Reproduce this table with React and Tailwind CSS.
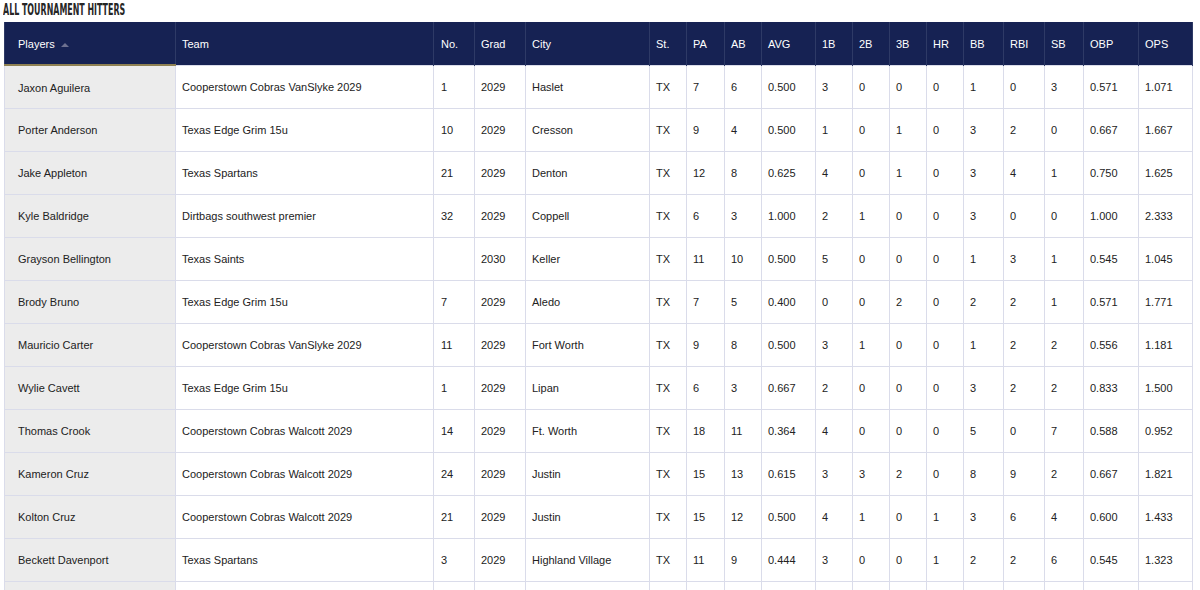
import React from "react";

const cols = [
  { label: "Players", w: "w-[171px]", pad: "pl-[13px]" },
  { label: "Team", w: "w-[258px]", pad: "pl-[6px]" },
  { label: "No.", w: "w-[41px]", pad: "pl-[7px]" },
  { label: "Grad", w: "w-[51px]", pad: "pl-[6px]" },
  { label: "City", w: "w-[124px]", pad: "pl-[6px]" },
  { label: "St.", w: "w-[37px]", pad: "pl-[6px]" },
  { label: "PA", w: "w-[38px]", pad: "pl-[6px]" },
  { label: "AB", w: "w-[37px]", pad: "pl-[6px]" },
  { label: "AVG", w: "w-[54px]", pad: "pl-[6px]" },
  { label: "1B", w: "w-[37px]", pad: "pl-[6px]" },
  { label: "2B", w: "w-[37px]", pad: "pl-[6px]" },
  { label: "3B", w: "w-[37px]", pad: "pl-[6px]" },
  { label: "HR", w: "w-[37px]", pad: "pl-[6px]" },
  { label: "BB", w: "w-[40px]", pad: "pl-[6px]" },
  { label: "RBI", w: "w-[41px]", pad: "pl-[6px]" },
  { label: "SB", w: "w-[39px]", pad: "pl-[6px]" },
  { label: "OBP", w: "w-[55px]", pad: "pl-[6px]" },
  { label: "OPS", w: "w-[54px]", pad: "pl-[6px]" },
];

// player, team, no, grad, city, st, pa, ab, avg, 1b, 2b, 3b, hr, bb, rbi, sb, obp, ops
const rows = [
  ["Jaxon Aguilera", "Cooperstown Cobras VanSlyke 2029", "1", "2029", "Haslet", "TX", "7", "6", "0.500", "3", "0", "0", "0", "1", "0", "3", "0.571", "1.071"],
  ["Porter Anderson", "Texas Edge Grim 15u", "10", "2029", "Cresson", "TX", "9", "4", "0.500", "1", "0", "1", "0", "3", "2", "0", "0.667", "1.667"],
  ["Jake Appleton", "Texas Spartans", "21", "2029", "Denton", "TX", "12", "8", "0.625", "4", "0", "1", "0", "3", "4", "1", "0.750", "1.625"],
  ["Kyle Baldridge", "Dirtbags southwest premier", "32", "2029", "Coppell", "TX", "6", "3", "1.000", "2", "1", "0", "0", "3", "0", "0", "1.000", "2.333"],
  ["Grayson Bellington", "Texas Saints", "", "2030", "Keller", "TX", "11", "10", "0.500", "5", "0", "0", "0", "1", "3", "1", "0.545", "1.045"],
  ["Brody Bruno", "Texas Edge Grim 15u", "7", "2029", "Aledo", "TX", "7", "5", "0.400", "0", "0", "2", "0", "2", "2", "1", "0.571", "1.771"],
  ["Mauricio Carter", "Cooperstown Cobras VanSlyke 2029", "11", "2029", "Fort Worth", "TX", "9", "8", "0.500", "3", "1", "0", "0", "1", "2", "2", "0.556", "1.181"],
  ["Wylie Cavett", "Texas Edge Grim 15u", "1", "2029", "Lipan", "TX", "6", "3", "0.667", "2", "0", "0", "0", "3", "2", "2", "0.833", "1.500"],
  ["Thomas Crook", "Cooperstown Cobras Walcott 2029", "14", "2029", "Ft. Worth", "TX", "18", "11", "0.364", "4", "0", "0", "0", "5", "0", "7", "0.588", "0.952"],
  ["Kameron Cruz", "Cooperstown Cobras Walcott 2029", "24", "2029", "Justin", "TX", "15", "13", "0.615", "3", "3", "2", "0", "8", "9", "2", "0.667", "1.821"],
  ["Kolton Cruz", "Cooperstown Cobras Walcott 2029", "21", "2029", "Justin", "TX", "15", "12", "0.500", "4", "1", "0", "1", "3", "6", "4", "0.600", "1.433"],
  ["Beckett Davenport", "Texas Spartans", "3", "2029", "Highland Village", "TX", "11", "9", "0.444", "3", "0", "0", "1", "2", "2", "6", "0.545", "1.323"],
  // next row is cut off by the window, only its top edge shows
  ["", "", "", "", "", "", "", "", "", "", "", "", "", "", "", "", "", ""],
];

const App = () => {
  return (
    <div className="bg-white h-[590px] overflow-hidden font-['Liberation_Sans',Arial,sans-serif]">
      <div className="h-[22px] pt-[2px] pl-[3px]">
        <h2 className="origin-left scale-x-[0.55] whitespace-nowrap text-[16px] leading-[16px] font-bold uppercase text-[#262626] font-['DejaVu_Sans_Condensed','DejaVu_Sans',sans-serif]">
          All Tournament Hitters
        </h2>
      </div>
      <div className="pl-[4px]">
        <table className="table-fixed border-collapse w-[1188px] border-x border-[#8d8d8d] text-[11px]">
          <thead>
            <tr className="h-[43px] bg-[#162253] text-white">
              {cols.map((c, i) => (
                <th
                  key={c.label}
                  className={`${c.w} ${c.pad} pt-[2px] text-left font-normal border-x border-[#2e3a66] ${
                    i === 0 ? "border-b-2 border-b-[#8f8152]" : ""
                  }`}
                >
                  {c.label}
                  {i === 0 && (
                    <span className="inline-block ml-[6px] align-middle w-0 h-0 border-x-[4px] border-x-transparent border-b-[4px] border-b-[#6d7190]" />
                  )}
                </th>
              ))}
            </tr>
          </thead>
          <tbody className="text-[#222]">
            {rows.map((r, ri) => (
              <tr key={ri} className="h-[43px]">
                {r.map((v, i) => (
                  <td
                    key={i}
                    className={`${cols[i].pad} pt-[2px] border border-[#dadcea] whitespace-nowrap ${
                      i === 0 ? "bg-[#ececec]" : "bg-white"
                    }`}
                  >
                    {v}
                  </td>
                ))}
              </tr>
            ))}
          </tbody>
        </table>
      </div>
    </div>
  );
};

export default App;
